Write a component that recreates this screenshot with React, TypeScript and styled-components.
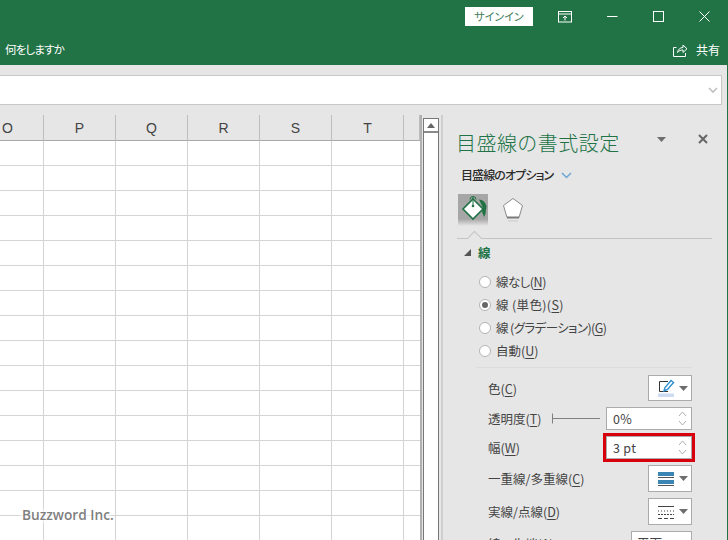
import React from "react";
import styled, { createGlobalStyle } from "styled-components";

const Global = createGlobalStyle`
  html, body { margin: 0; padding: 0; background: #e6e6e6; }
  body { font-family: "Noto Sans CJK JP", "Noto Sans", sans-serif; font-feature-settings: "palt"; }
  * { box-sizing: border-box; }
`;

const GREEN = "#217346";

const Page = styled.div`
  width: 728px; height: 540px; overflow: hidden; display: flex; flex-direction: column;
  background: #e6e6e6; border-right: 1px solid ${GREEN};
`;
const TitleBar = styled.div`
  height: 33px; background: ${GREEN}; display: flex; align-items: center; padding: 0 0 0 465px; flex: none;
`;
const SignIn = styled.div`
  width: 68px; height: 19px; background: #fff; color: #3f7d5c; font-size: 11px; line-height: 19px; text-align: center; flex: none;
`;
const WinButton = styled.div<{ $w: number }>`
  width: ${p => p.$w}px; height: 33px; display: flex; align-items: center; justify-content: center; flex: none;
`;
const RibbonBar = styled.div`
  height: 32px; background: ${GREEN}; color: #fff; display: flex; align-items: center; justify-content: space-between;
  padding: 0 7px 0 5px; font-size: 11.5px; letter-spacing: -0.85px; flex: none;
`;
const Share = styled.div`display: flex; align-items: center; gap: 8px; font-size: 12px; letter-spacing: 0;`;
const FormulaArea = styled.div`
  height: 50px; padding: 10px 5px 10px 0; flex: none;
`;
const FormulaInput = styled.div`
  height: 30px; background: #fff; border: 1px solid #c8c8c8; border-left: none; display: flex; align-items: center; justify-content: flex-end; padding-right: 3px;
`;
const Main = styled.div`display: flex; flex: 1; min-height: 0;`;
const Sheet = styled.div`
  width: 422px; flex: none; position: relative; overflow: hidden; border-right: 2px solid #b0b0b0; background: #fff;
`;
const Watermark = styled.div`
  position: absolute; left: 22px; top: 391px; font-family: "Open Sans", sans-serif; font-weight: 600; font-size: 13.7px; line-height: 18px; color: #7f7f7f;
  text-shadow: 0 0 3px #fff, 0 0 4px #fff, 0 0 6px #fff, 0 0 8px #fff;
`;
const Grid = styled.div`
  display: grid; grid-template-columns: repeat(6, 72px) 16px; margin-left: -28px; width: 448px;
`;
const ColHead = styled.div`
  height: 26px; padding-top: 1px; background: #e6e6e6; border-bottom: 1px solid #a8a8a8; border-right: 1px solid #bdbdbd;
  font-family: "Liberation Sans", sans-serif; font-size: 14px; line-height: 24px; text-align: center; color: #444;
  &:last-of-type { border-right: none; }
`;
const Cell = styled.div<{ $last?: boolean }>`
  height: 25px; border-bottom: 1px solid #d4d4d4; border-right: ${p => (p.$last ? "none" : "1px solid #d4d4d4")};
`;
const ScrollCol = styled.div`
  width: 21px; flex: none; display: flex; flex-direction: column; padding: 3px 3px 0 1px; background: #e6e6e6;
  border-right: 2px solid #cfcfcf;
`;
const ScrollInner = styled.div`
  flex: 1; display: flex; flex-direction: column; background: #fff; border-left: 1.5px solid #777; border-right: 1.5px solid #777; border-top: 1.5px solid #777; margin-right: -1px;
`;
const ScrollUp = styled.div`
  height: 14px; border-bottom: 2px solid #8a8a8a; display: flex; align-items: center; justify-content: center; flex: none;
`;
const Pane = styled.div`
  flex: 1; min-width: 0; padding: 14px 14px 0 14px; display: flex; flex-direction: column;
`;
const PaneHead = styled.div`display: flex; align-items: center; height: 28px; flex: none; margin-right: -11px;`;
const PaneTitle = styled.div`
  flex: 1; color: ${GREEN}; font-size: 20px; line-height: 28px; letter-spacing: 0.45px; font-feature-settings: normal; font-weight: 300; margin-left: -1px;
`;
const PaneCtl = styled.div<{ $w: number; $top: number }>`
  width: ${p => p.$w}px; height: 28px; display: flex; justify-content: center; align-items: flex-start; padding-top: ${p => p.$top}px; flex: none;
`;
const OptionRow = styled.div`
  display: flex; align-items: center; gap: 8px; height: 22px; margin: 7px 0 0 4px; flex: none; color: #2b2b2b; font-size: 12px; font-weight: 500; line-height: 22px; letter-spacing: -0.9px;
`;
const Tabs = styled.div`display: flex; align-items: flex-start; gap: 10px; margin: 8px 0 0 1px; height: 44px; flex: none;`;
const TabIcon = styled.div<{ $on?: boolean }>`
  width: 30px; height: 32px; display: flex; align-items: flex-start; justify-content: center; padding-top: ${p => (p.$on ? 0 : 2)}px;
  background: ${p => (p.$on ? "linear-gradient(#a6a6a6 0, #a6a6a6 78%, #e6e6e6 100%)" : "transparent")};
`;
const Divider = styled.div`
  height: 1px; background: #c4c4c4; margin-right: 1px; position: relative; flex: none;
  &::after {
    content: ""; position: absolute; left: 12px; top: -5px; width: 10px; height: 10px; transform: rotate(45deg);
    background: #e6e6e6; border-left: 1px solid #c4c4c4; border-top: 1px solid #c4c4c4;
  }
`;
const Section = styled.div`
  display: flex; align-items: center; gap: 7px; margin: 3px 0 0 7px; height: 20px; flex: none; color: ${GREEN}; font-size: 12.5px; font-weight: 700;
`;
const Radios = styled.div`
  display: flex; flex-direction: column; margin: 8px 0 0 22px; flex: none;
`;
const RadioRow = styled.div`
  height: 23px; display: flex; align-items: center; gap: 5px; font-size: 12.5px; color: #444;
`;
const RadioLabel = styled.span<{ $ls: number }>`letter-spacing: ${p => p.$ls}px;`;
const Radio = styled.span<{ $on?: boolean }>`
  width: 12px; height: 12px; border-radius: 50%; border: 1px solid #b4b4b4; background: #fff; display: flex; align-items: center; justify-content: center; flex: none;
  &::after { content: ""; width: 6px; height: 6px; border-radius: 50%; background: ${p => (p.$on ? "#666" : "transparent")}; }
`;
const Key = styled.span`text-decoration: underline; text-underline-offset: 2px; text-decoration-thickness: 1px;`;
const Rule = styled.div`height: 1px; background: #dcdcdc; margin: 5px 21px 0 19px; flex: none;`;
const Props = styled.div`display: flex; flex-direction: column; gap: 6px; margin: 7px 21px 0 31px; flex: none;`;
const PropRow = styled.div<{ $h: number }>`
  height: ${p => p.$h}px; display: flex; align-items: center; justify-content: space-between; flex: none; font-size: 12.5px; color: #444;
`;
const Control = styled.div`display: flex; align-items: center; gap: 6px; flex: none;`;
const DropBtn = styled.div`
  width: 44px; align-self: stretch; background: #fff; border: 1px solid #ababab; display: flex; align-items: center; justify-content: space-between; padding: 0 3px 0 9px;
`;
const Spinner = styled.div<{ $mark?: boolean }>`
  width: 86px; height: 23px; background: #fff; border: 1px solid #ababab; display: flex; align-items: center; justify-content: space-between;
  padding: 0 2px 0 6px; font-size: 12.5px; color: #444; letter-spacing: 0.3px;
  ${p => (p.$mark ? "outline: 3px solid #d9000d; outline-offset: 0;" : "")}
`;
const SpinArrows = styled.div`display: flex; flex-direction: column; gap: 3px; width: 14px; align-items: center;`;
const Combo = styled.div`
  width: 61px; height: 24px; background: #fff; border: 1px solid #ababab; padding-left: 5px; font-size: 12.5px; color: #444; line-height: 22px;
`;
const PropRowWrap = styled.div`display: flex; flex: 1; align-items: center; justify-content: flex-end;`;

const Caret = () => (
  <svg width="9" height="5" viewBox="0 0 9 5"><path d="M0 0h9L4.5 5z" fill="#6e6e6e" /></svg>
);
const SpinArrow = ({ up }: { up?: boolean }) => (
  <svg width="9" height="6" viewBox="0 0 9 6"><path d={up ? "M1 5l3.5-4L8 5" : "M1 1l3.5 4L8 1"} fill="none" stroke="#b0b0b0" /></svg>
);
const SpinBtns = () => (
  <SpinArrows><SpinArrow up /><SpinArrow /></SpinArrows>
);

const cols = ["O", "P", "Q", "R", "S", "T", ""];
const rows = Array.from({ length: 16 });

export default function App() {
  return (
    <Page>
      <Global />
      <TitleBar>
        <SignIn>サインイン</SignIn>
        <WinButton $w={64}>
          <svg width="14" height="12" viewBox="0 0 14 12" fill="none" stroke="#fff">
            <rect x="0.5" y="0.5" width="13" height="10.5" />
            <path d="M1 3h12" />
            <path d="M7 9.5V5M5 7l2-2 2 2" />
          </svg>
        </WinButton>
        <WinButton $w={30}>
          <svg width="11" height="11" viewBox="0 0 11 11" stroke="#fff"><path d="M0 5.5h10.5" /></svg>
        </WinButton>
        <WinButton $w={62}>
          <svg width="11" height="11" viewBox="0 0 11 11" fill="none" stroke="#fff"><rect x="0.5" y="0.5" width="10" height="10" /></svg>
        </WinButton>
        <WinButton $w={30}>
          <svg width="11" height="11" viewBox="0 0 11 11" stroke="#fff"><path d="M0.5 0.5l10 10M10.5 0.5l-10 10" /></svg>
        </WinButton>
      </TitleBar>
      <RibbonBar>
        <span>何をしますか</span>
        <Share>
          <svg width="15" height="15" viewBox="0 0 15 15" fill="none" stroke="#fff">
            <path d="M3.5 5.5H0.5V14.5H12.5V11" />
            <path d="M4.5 10.5C5 7.5 7 5.5 10 5.5V3L14 6.8 10 10.5V8C8 8 6 8.5 4.5 10.5Z" />
          </svg>
          <span>共有</span>
        </Share>
      </RibbonBar>
      <FormulaArea>
        <FormulaInput>
          <svg width="10" height="7" viewBox="0 0 10 7"><path d="M1 1l4 4 4-4" fill="none" stroke="#c0c0c0" strokeWidth="1.6" /></svg>
        </FormulaInput>
      </FormulaArea>
      <Main>
        <Sheet>
          <Grid>
            {cols.map((c, i) => <ColHead key={i}>{c}</ColHead>)}
            {rows.map((_, r) =>
              cols.map((_, c) => <Cell key={`${r}-${c}`} $last={c === 6} />)
            )}
          </Grid>
          <Watermark>Buzzword Inc.</Watermark>
        </Sheet>
        <ScrollCol>
          <ScrollInner>
            <ScrollUp>
              <svg width="8" height="5" viewBox="0 0 8 5"><path d="M0 5h8L4 0z" fill="#666" /></svg>
            </ScrollUp>
          </ScrollInner>
        </ScrollCol>
        <Pane>
          <PaneHead>
            <PaneTitle>目盛線の書式設定</PaneTitle>
            <PaneCtl $w={42} $top={8}><Caret /></PaneCtl>
            <PaneCtl $w={42} $top={5}>
              <svg width="10" height="10" viewBox="0 0 10 10" stroke="#666" strokeWidth="2"><path d="M1 1l8 8M9 1l-8 8" /></svg>
            </PaneCtl>
          </PaneHead>
          <OptionRow>
            <span>目盛線のオプション</span>
            <svg width="11" height="7" viewBox="0 0 11 7"><path d="M1 1l4.5 4.5L10 1" fill="none" stroke="#6ba7d6" strokeWidth="1.5" /></svg>
          </OptionRow>
          <Tabs>
            <TabIcon $on>
              <svg width="30" height="30" viewBox="0 0 30 30">
                <path d="M15 5L25 15 15 25 5 15z" fill="#fff" stroke={GREEN} strokeWidth="1.6" />
                <path d="M21 5.5C25 5.5 27.5 8.5 28.5 12L27.5 20 26 23 24 18 25 14z" fill={GREEN} />
                <path d="M12 5.5a3 3 0 0 1 6 0M15 3v8" fill="none" stroke={GREEN} strokeWidth="1" />
                <circle cx="15" cy="12" r="1.3" fill={GREEN} />
              </svg>
            </TabIcon>
            <TabIcon>
              <svg width="24" height="28" viewBox="0 0 24 28">
                <path d="M12 2.5L21.5 9.5 18 21.5H6L2.5 9.5z" fill="#fff" stroke="#8a8a8a" strokeWidth="1" />
                <path d="M6 21.5h12" stroke="#7a7a7a" strokeWidth="2" />
                <path d="M7 25h10" stroke="#d8d8d8" strokeWidth="2" />
              </svg>
            </TabIcon>
          </Tabs>
          <Divider />
          <Section>
            <svg width="7" height="7" viewBox="0 0 7 7"><path d="M7 0v7H0z" fill="#555" /></svg>
            <span>線</span>
          </Section>
          <Radios>
            <RadioRow><Radio /><RadioLabel $ls={-0.5}>線なし(<Key>N</Key>)</RadioLabel></RadioRow>
            <RadioRow><Radio $on /><RadioLabel $ls={0.35}>線 (単色)(<Key>S</Key>)</RadioLabel></RadioRow>
            <RadioRow><Radio /><RadioLabel $ls={-0.6}>線 (グラデーション)(<Key>G</Key>)</RadioLabel></RadioRow>
            <RadioRow><Radio /><RadioLabel $ls={0}>自動(<Key>U</Key>)</RadioLabel></RadioRow>
          </Radios>
          <Rule />
          <Props>
            <PropRow $h={26}>
              <span>色(<Key>C</Key>)</span>
              <DropBtn>
                <svg width="18" height="20" viewBox="0 0 18 20">
                  <path d="M10 3.5H1.5V13.5H10" fill="none" stroke="#333" />
                  <path d="M6 13l1-3.5 6-7 2.5 2-6 7z" fill="#fff" stroke="#2f8fd0" strokeWidth="1.4" />
                  <rect x="0" y="15.5" width="16" height="3.5" fill="#cddcf2" />
                </svg>
                <Caret />
              </DropBtn>
            </PropRow>
            <PropRow $h={23}>
              <span>透明度(<Key>T</Key>)</span>
              <PropRowWrap>
                <Control>
                  <svg width="48" height="11" viewBox="0 0 48 11" stroke="#808080"><path d="M0.5 0.5v10M0.5 5.5H48" /></svg>
                  <Spinner>0%<SpinBtns /></Spinner>
                </Control>
              </PropRowWrap>
            </PropRow>
            <PropRow $h={23}>
              <span>幅(<Key>W</Key>)</span>
              <Spinner $mark>3 pt<SpinBtns /></Spinner>
            </PropRow>
            <PropRow $h={27}>
              <span>一重線/多重線(<Key>C</Key>)</span>
              <DropBtn>
                <svg width="17" height="16" viewBox="0 0 17 16">
                  <rect x="0" y="1" width="16" height="4" fill="#3b85b5" />
                  <rect x="0" y="6" width="16" height="1" fill="#555" />
                  <rect x="0" y="9" width="16" height="4" fill="#3b85b5" />
                  <rect x="0" y="14" width="16" height="1" fill="#555" />
                </svg>
                <Caret />
              </DropBtn>
            </PropRow>
            <PropRow $h={27}>
              <span>実線/点線(<Key>D</Key>)</span>
              <DropBtn>
                <svg width="17" height="16" viewBox="0 0 17 16" stroke="#444" fill="none">
                  <path d="M0 2.5h16" />
                  <path d="M0 7h16" strokeDasharray="1 2" />
                  <path d="M0 10.5h16" strokeDasharray="2 1" />
                  <path d="M0 14.5h16" strokeDasharray="4 2" />
                </svg>
                <Caret />
              </DropBtn>
            </PropRow>
            <PropRow $h={24}>
              <span>線の先端(<Key>A</Key>)</span>
              <Combo>平面</Combo>
            </PropRow>
          </Props>
        </Pane>
      </Main>
    </Page>
  );
}
